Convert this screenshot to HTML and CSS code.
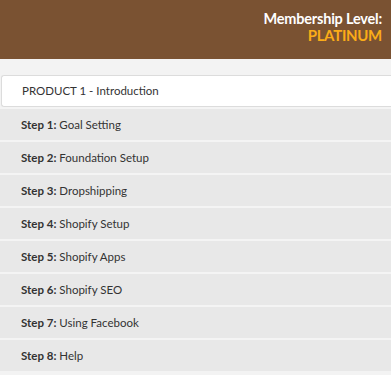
FILE: index.html
```html
<!DOCTYPE html>
<html lang="en">
<head>
<meta charset="UTF-8">
<meta name="viewport" content="width=device-width, initial-scale=1.0">
<title>Course Modules</title>
<link rel="stylesheet" href="styles.css">
</head>
<body>

<div class="topbar">
  <div class="level">
    <div class="level-label">Membership Level:</div>
    <div class="level-name">PLATINUM</div>
  </div>
</div>

<div class="content">
  <div class="product">PRODUCT 1 - Introduction</div>
  <ul class="steps">
    <li><b>Step 1:</b> Goal Setting</li>
    <li><b>Step 2:</b> Foundation Setup</li>
    <li><b>Step 3:</b> Dropshipping</li>
    <li><b>Step 4:</b> Shopify Setup</li>
    <li><b>Step 5:</b> Shopify Apps</li>
    <li><b>Step 6:</b> Shopify SEO</li>
    <li><b>Step 7:</b> Using Facebook</li>
    <li><b>Step 8:</b> Help</li>
  </ul>
</div>

</body>
</html>
```
FILE: styles.css
```css
body {
  font-family: Lato, "Open Sans", sans-serif;
  margin: 0;
  padding: 0;
  background-color: #f3f3f3;
  color: #333;
}
.topbar {
  height: 59px;
  background-color: #7a5232;
  display: flex;
  justify-content: flex-end;
  align-items: flex-start;
  padding: 0 9px 0 0;
}
.level {
  text-align: right;
  padding-top: 10px;
  font-weight: bold;
}
.level-label {
  color: #fff;
  font-size: 14.5px;
  line-height: 17px;
  letter-spacing: -0.2px;
}
.level-name {
  color: #fbac18;
  font-size: 15px;
  line-height: 17px;
  letter-spacing: -0.3px;
}
.content {
  padding-top: 16px;
}
.product {
  background-color: #fff;
  border: 1px solid #dcdcdc;
  border-right: none;
  border-radius: 3px 0 0 3px;
  margin-left: 1px;
  height: 30px;
  line-height: 30px;
  padding-left: 20px;
  font-size: 11.5px;
  color: #333;
}
.steps {
  list-style: none;
  margin: 0;
  padding: 0;
}
.steps li {
  background-color: #e8e8e8;
  border-top: 2px solid #f4f4f4;
  height: 31px;
  line-height: 31px;
  padding-left: 21px;
  font-size: 11.5px;
  color: #333;
}
.steps li b {
  font-weight: bold;
}
```
